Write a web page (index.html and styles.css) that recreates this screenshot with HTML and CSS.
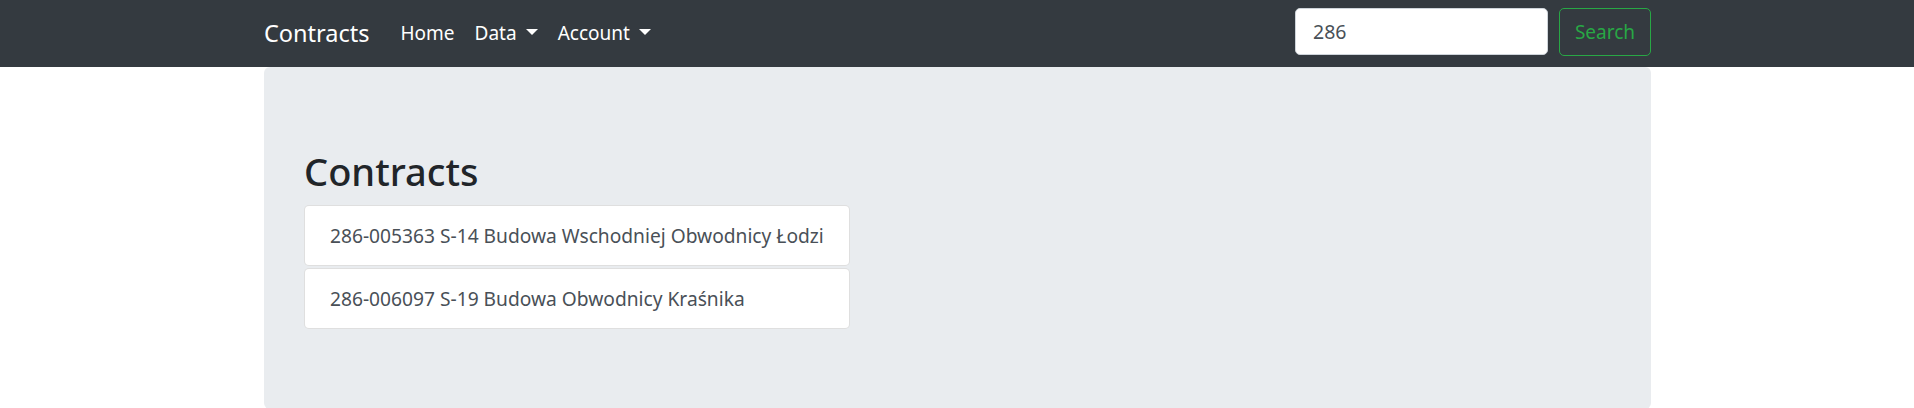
FILE: index.html
```html
<!DOCTYPE html>
<html lang="pl">
<head>
<meta charset="utf-8">
<title>Contracts</title>
<link rel="stylesheet" href="styles.css">
</head>
<body>
<nav class="navbar">
  <div class="container nav-inner">
    <a class="brand" href="#">Contracts</a>
    <ul class="nav-links">
      <li><a class="nav-link" href="#">Home</a></li>
      <li><a class="nav-link dropdown" href="#">Data</a></li>
      <li><a class="nav-link dropdown" href="#">Account</a></li>
    </ul>
    <form class="search-form">
      <input class="search-input" type="text" value="286">
      <button class="search-btn" type="button">Search</button>
    </form>
  </div>
</nav>
<main class="container">
  <section class="jumbotron">
    <h2 class="title">Contracts</h2>
    <div class="list">
      <a class="list-item" href="#">286-005363 S-14 Budowa Wschodniej Obwodnicy Łodzi</a>
      <a class="list-item" href="#">286-006097 S-19 Budowa Obwodnicy Kraśnika</a>
    </div>
  </section>
</main>
</body>
</html>
```
FILE: styles.css
```css
* { box-sizing: border-box; }
html, body { margin: 0; padding: 0; }
body {
  font-family: "Segoe UI", "Noto Sans", sans-serif;
  font-size: 19px;
  line-height: 1.5;
  color: #212529;
  background: #fff;
}
.container {
  width: 1388px;
  margin: 0 auto;
}
.navbar {
  background: #343a40;
  height: 67px;
  padding: 8px 0 12px;
}
.nav-inner {
  display: flex;
  align-items: center;
  height: 47px;
}
.brand {
  color: #fff;
  text-decoration: none;
  font-size: 23.5px;
  line-height: 1;
  margin: 4px 21px 0 1px;
}
.nav-links {
  display: flex;
  list-style: none;
  margin: 3px 0 0;
  padding: 0;
  flex: 1;
}
.nav-link {
  display: block;
  color: #fff;
  text-decoration: none;
  padding: 0 10px;
  font-size: 19px;
  line-height: 30px;
}
.dropdown::after {
  content: "";
  display: inline-block;
  margin-left: 9px;
  vertical-align: 5px;
  border-top: 6px solid;
  border-right: 6px solid transparent;
  border-left: 6px solid transparent;
  border-bottom: 0;
}
.search-form {
  display: flex;
  align-items: center;
  gap: 11px;
}
.search-input {
  width: 253px;
  height: 47px;
  padding: 0 16px 0 17px;
  font-family: inherit;
  font-size: 19.5px;
  color: #495057;
  background: #fff;
  border: 1px solid #ced4da;
  border-radius: 5px;
  outline: none;
}
.search-btn {
  height: 48px;
  width: 92px;
  padding: 0;
  font-family: inherit;
  font-size: 19px;
  color: #28a745;
  background: transparent;
  border: 1px solid #28a745;
  border-radius: 5px;
}
.jumbotron {
  background: #e9ecef;
  border-radius: 6px;
  padding: 80px 40px;
  margin-left: 1px;
}
.title {
  margin: 0 0 10px;
  font-size: 38px;
  font-weight: 500;
  line-height: 48px;
  color: #212529;
}
.list {
  display: inline-flex;
  flex-direction: column;
  gap: 2px;
}
.list-item {
  display: block;
  background: #fff;
  border: 1px solid rgba(0,0,0,.125);
  border-radius: 5px;
  padding: 15px 25px 14px;
  font-size: 19.2px;
  line-height: 30px;
  color: #495057;
  text-decoration: none;
  white-space: nowrap;
}
```
